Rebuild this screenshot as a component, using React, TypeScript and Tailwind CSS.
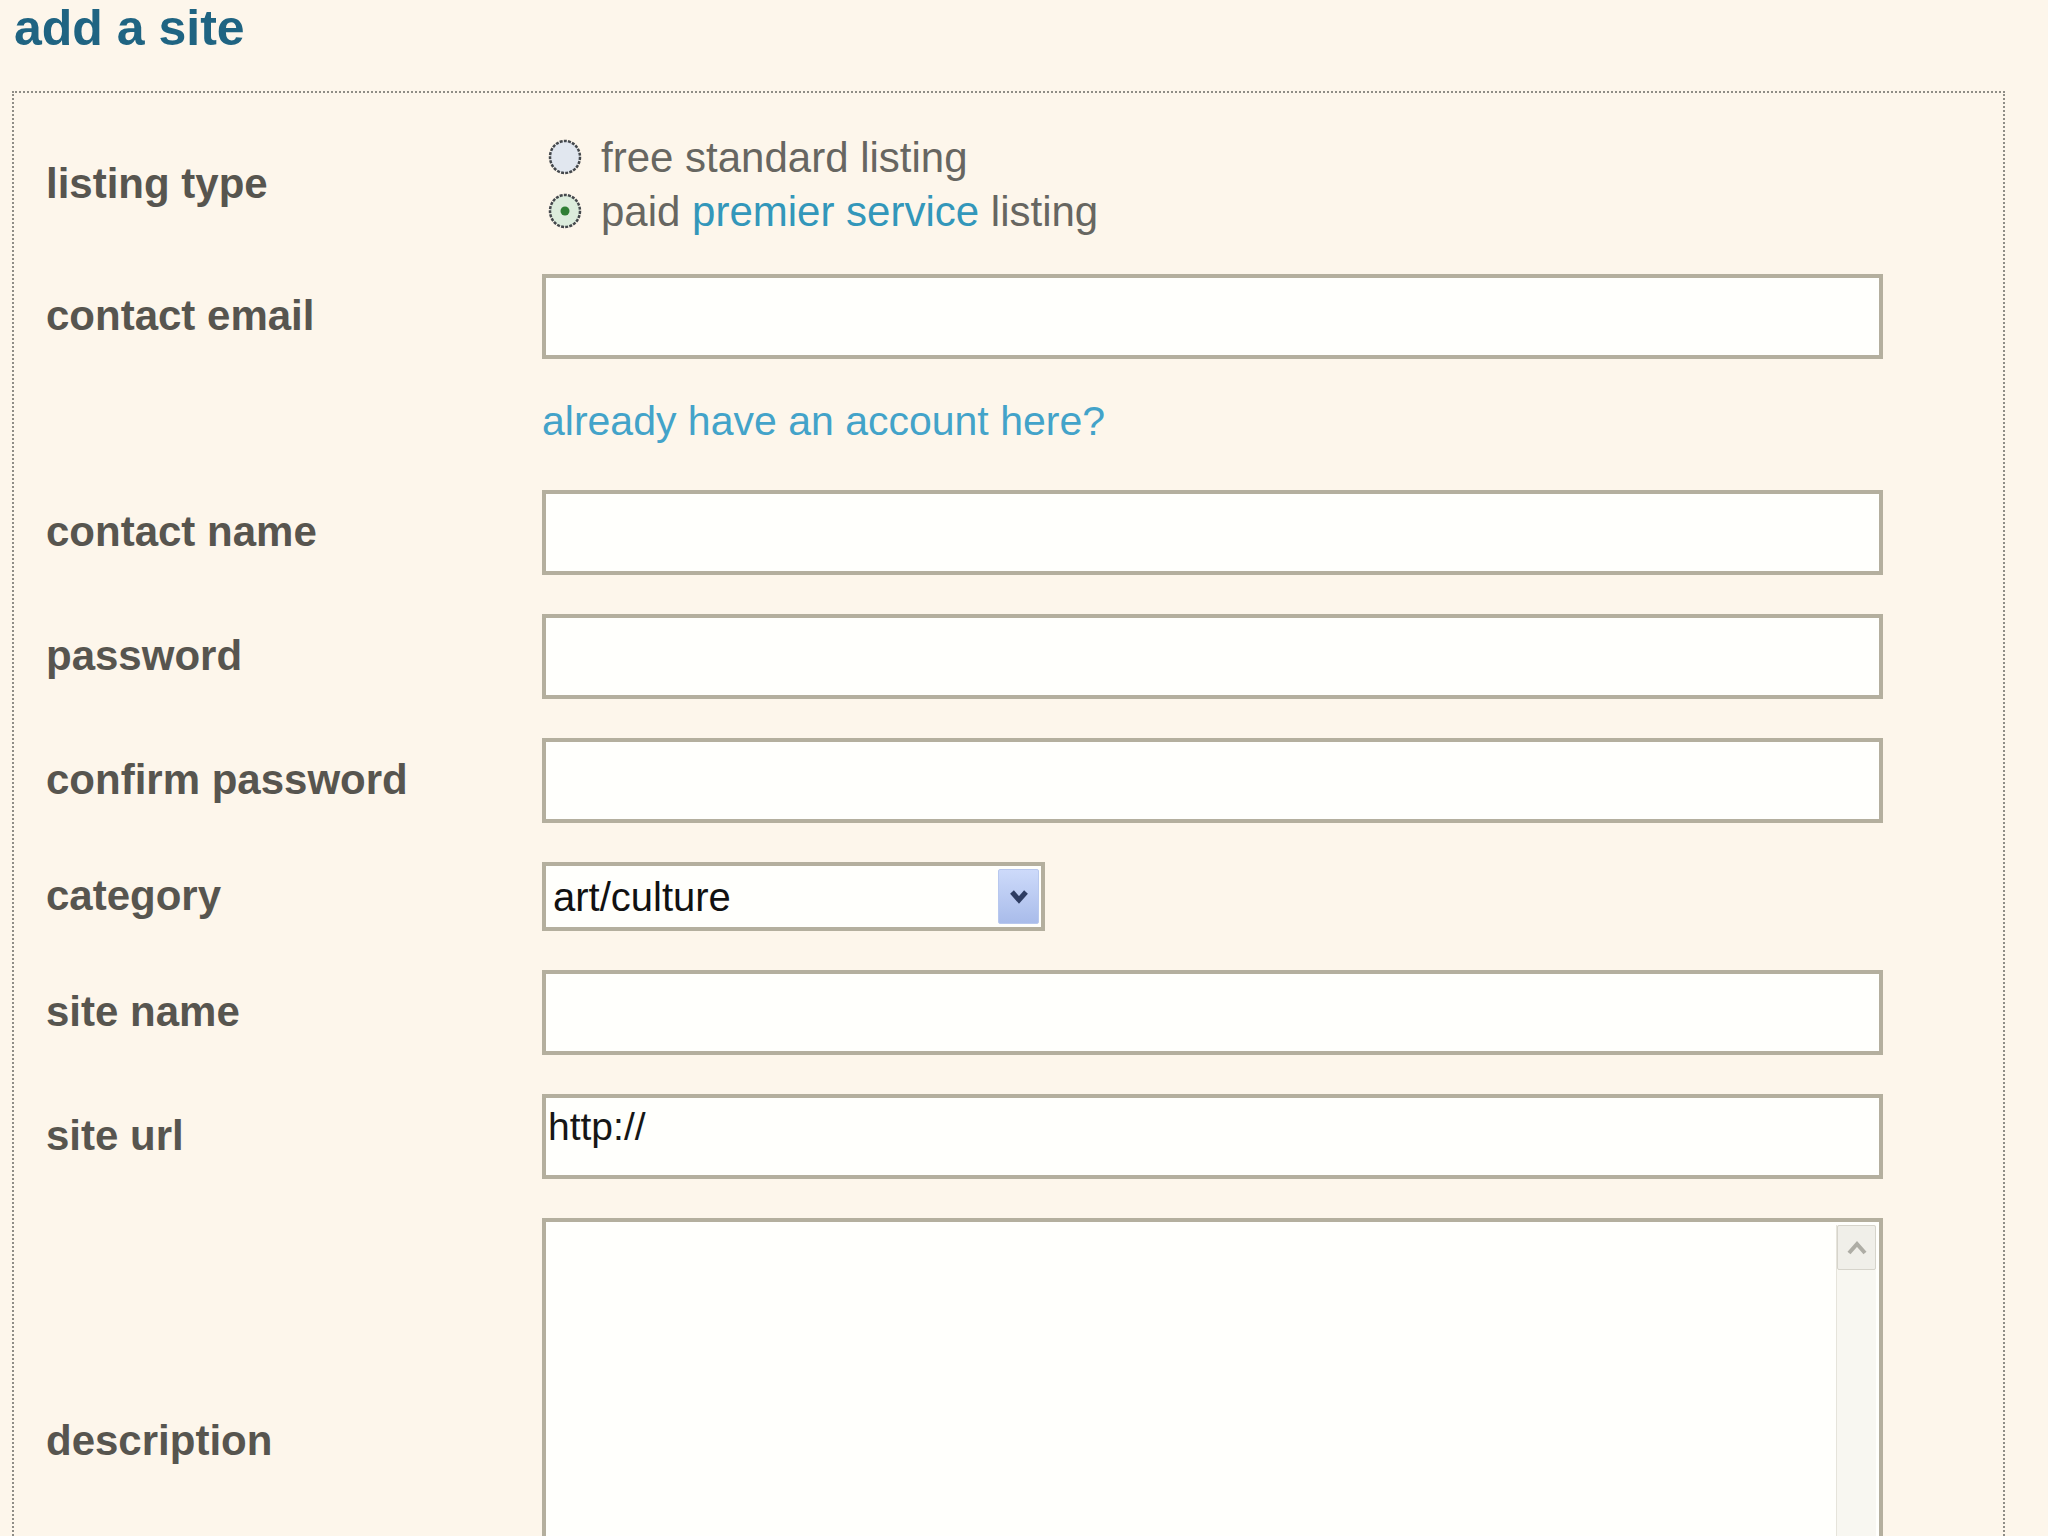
import React from "react";

const labelCls = "w-[496px] shrink-0 text-[42px] font-bold leading-[1.15] text-[#57554f]";
const boxCls = "w-[1341px] h-[85px] border-4 border-[#b4af9e] bg-[#fffffc] outline-none";

function Row({ label, className, children }: { label: string; className: string; children: React.ReactNode }) {
  return (
    <div className={`flex items-center ${className}`}>
      <div className={labelCls}>{label}</div>
      {children}
    </div>
  );
}

function Radio({ checked }: { checked?: boolean }) {
  return (
    <svg width="34" height="36" viewBox="0 0 34 36" className="shrink-0">
      <ellipse
        cx="17"
        cy="18"
        rx="15"
        ry="16"
        fill={checked ? "#dcecdc" : "#e1e7ef"}
        stroke="#44484c"
        strokeWidth="2.5"
        strokeDasharray="3 1.2"
      />
      {checked && <circle cx="17" cy="18" r="4.5" fill="#2f7f35" />}
    </svg>
  );
}

export default function App() {
  return (
    <div className="h-[1536px] w-full overflow-hidden bg-[#fdf6eb] font-['Liberation_Sans',Arial,sans-serif]">
      <h1 className="h-[91px] pl-[14px] text-[50px] font-bold leading-[56px] text-[#1f6482]">add a site</h1>

      <div className="ml-[12px] w-[1993px] border-2 border-b-0 border-dotted border-[#8f8d86] pt-[37px] pl-[32px] pb-[200px]">
        <Row label="listing type" className="">
          <div className="flex flex-col text-[42px] text-[#676661]">
            <div className="flex h-[54px] items-center gap-[19px] pl-[6px]">
              <Radio />
              <span>free standard listing</span>
            </div>
            <div className="flex h-[54px] items-center gap-[19px] pl-[6px]">
              <Radio checked />
              <span>
                paid <span className="text-[#3397ba]">premier service</span> listing
              </span>
            </div>
          </div>
        </Row>

        <Row label="contact email" className="mt-[36px]">
          <input type="text" className={boxCls} />
        </Row>

        <div className="mt-[36px] flex h-[54px] items-center">
          <div className="w-[496px] shrink-0" />
          <span className="text-[41px] text-[#43a3c9]">already have an account here?</span>
        </div>

        <Row label="contact name" className="mt-[41px]">
          <input type="text" className={boxCls} />
        </Row>

        <Row label="password" className="mt-[39px]">
          <input type="password" className={boxCls} />
        </Row>

        <Row label="confirm password" className="mt-[39px]">
          <input type="password" className={boxCls} />
        </Row>

        <Row label="category" className="mt-[39px]">
          <div className="flex h-[69px] w-[503px] items-center justify-between border-4 border-[#b4af9e] bg-[#fffffc] pl-[7px] pr-[2px]">
            <span className="text-[40px] text-[#111]">art/culture</span>
            <div className="flex h-[55px] w-[41px] items-center justify-center rounded-[2px] border border-[#b8c8ee] bg-gradient-to-b from-[#cddafa] to-[#a9bcea]">
              <svg width="22" height="20" viewBox="0 0 22 20">
                <polyline points="4,5 11,13 18,5" fill="none" stroke="#2e3d63" strokeWidth="5" />
              </svg>
            </div>
          </div>
        </Row>

        <Row label="site name" className="mt-[39px]">
          <input type="text" className={boxCls} />
        </Row>

        <Row label="site url" className="mt-[39px]">
          <div className={`${boxCls} pl-[2px] pt-[7px] text-[39px] leading-[1.15] text-[#161616]`}>http://</div>
        </Row>

        <Row label="description" className="mt-[39px]">
          <div className="flex h-[446px] w-[1341px] justify-end border-4 border-[#b4af9e] bg-[#fffffc] pr-[3px] pt-[3px]">
            <div className="flex w-[40px] flex-col border-l border-[#e6e4db] bg-[#f8f7f1]">
              <div className="flex h-[45px] items-center justify-center rounded-[2px] border border-[#d6d4cb] bg-[#f0efe9]">
                <svg width="22" height="16" viewBox="0 0 22 16">
                  <polyline points="3,13 11,4 19,13" fill="none" stroke="#aeada5" strokeWidth="4" />
                </svg>
              </div>
            </div>
          </div>
        </Row>
      </div>
    </div>
  );
}
